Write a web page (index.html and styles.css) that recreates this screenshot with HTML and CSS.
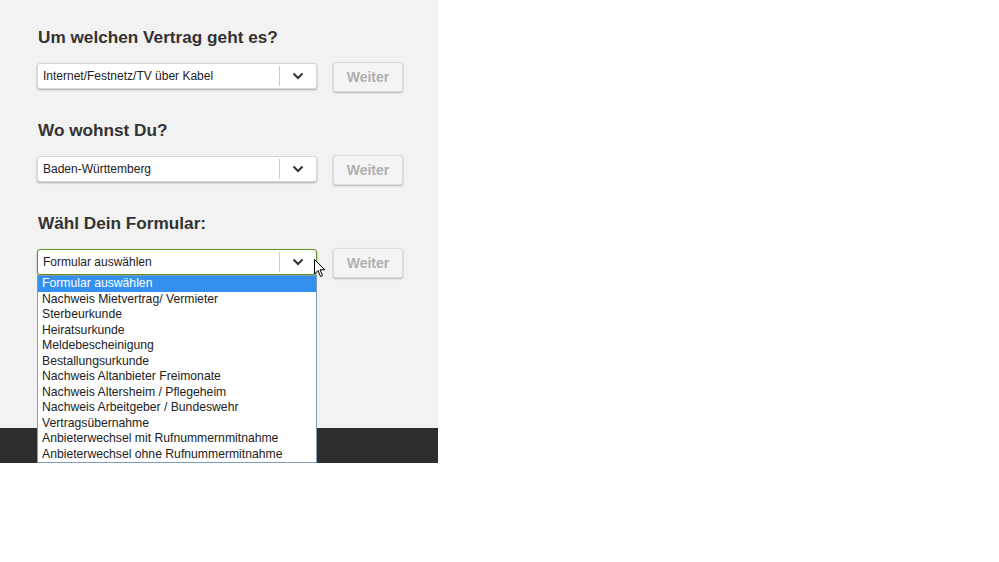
FILE: index.html
```html
<!DOCTYPE html>
<html lang="de">
<head>
    <meta charset="UTF-8">
    <title>Formular</title>
    <link rel="stylesheet" href="styles.css">
</head>
<body>

    <div class="page">
        <div class="panel">

            <!-- Vertrag -->
            <div class="step">
                <h2>Um welchen Vertrag geht es?</h2>
                <div class="row">
                    <div class="select">
                        <span class="value">Internet/Festnetz/TV über Kabel</span>
                        <span class="arrow"><svg width="12" height="8" viewBox="0 0 12 8"><path d="M1.5 1.5 L6 6 L10.5 1.5" fill="none" stroke="#333" stroke-width="2"/></svg></span>
                    </div>
                    <button class="btn">Weiter</button>
                </div>
            </div>

            <!-- Bundesland -->
            <div class="step">
                <h2>Wo wohnst Du?</h2>
                <div class="row">
                    <div class="select">
                        <span class="value">Baden-Württemberg</span>
                        <span class="arrow"><svg width="12" height="8" viewBox="0 0 12 8"><path d="M1.5 1.5 L6 6 L10.5 1.5" fill="none" stroke="#333" stroke-width="2"/></svg></span>
                    </div>
                    <button class="btn">Weiter</button>
                </div>
            </div>

            <!-- Formular -->
            <div class="step">
                <h2>Wähl Dein Formular:</h2>
                <div class="row">
                    <div class="select open">
                        <span class="value">Formular auswählen</span>
                        <span class="arrow"><svg width="12" height="8" viewBox="0 0 12 8"><path d="M1.5 1.5 L6 6 L10.5 1.5" fill="none" stroke="#333" stroke-width="2"/></svg></span>
                        <ul class="options">
                            <li class="selected">Formular auswählen</li>
                            <li>Nachweis Mietvertrag/ Vermieter</li>
                            <li>Sterbeurkunde</li>
                            <li>Heiratsurkunde</li>
                            <li>Meldebescheinigung</li>
                            <li>Bestallungsurkunde</li>
                            <li>Nachweis Altanbieter Freimonate</li>
                            <li>Nachweis Altersheim / Pflegeheim</li>
                            <li>Nachweis Arbeitgeber / Bundeswehr</li>
                            <li>Vertragsübernahme</li>
                            <li>Anbieterwechsel mit Rufnummernmitnahme</li>
                            <li>Anbieterwechsel ohne Rufnummermitnahme</li>
                        </ul>
                        <svg class="cursor" width="12" height="19" viewBox="0 0 12 19"><path d="M0.5 0.5 L0.5 15 L4 11.5 L6.5 17.5 L8.5 16.5 L6 10.8 L10.8 10.8 Z" fill="#fff" stroke="#000" stroke-width="1"/></svg>
                    </div>
                    <button class="btn">Weiter</button>
                </div>
            </div>

        </div>
        <div class="footer"></div>
    </div>

</body>
</html>
```

FILE: styles.css
```css
* {
    margin: 0;
    padding: 0;
    box-sizing: border-box;
    font-family: "Liberation Sans", Arial, sans-serif;
}
body {
    background: #fff;
}

.page {
    width: 438px;
}

/* Grey panel */
.panel {
    background: #f2f2f2;
    height: 428px;
    padding: 26px 0 0 37px;
}
.step {
    margin-bottom: 27px;
}
h2 {
    font-size: 17.2px;
    line-height: 22px;
    font-weight: bold;
    color: #333;
    margin: 0 0 15px 1px;
}
.row {
    display: flex;
    align-items: flex-start;
    gap: 16px;
}

/* Select box */
.select {
    position: relative;
    display: flex;
    align-items: center;
    width: 280px;
    height: 26px;
    background: #fff;
    border: 1px solid #d6d6d6;
    border-radius: 3px;
    box-shadow: 0px 1px 2px rgba(0, 0, 0, 0.3);
}
.select .value {
    flex: 1;
    font-size: 12px;
    color: #222;
    padding-left: 5px;
}
.select .arrow {
    width: 37px;
    height: 20px;
    border-left: 1px solid #ccc;
    display: flex;
    align-items: center;
    justify-content: center;
}
.select.open {
    border-color: #5f8f22;
}

/* Dropdown list */
.options {
    position: absolute;
    top: 25px;
    left: -1px;
    width: 280px;
    list-style: none;
    background: #fff;
    border: 1px solid #7f9db9;
    z-index: 10;
}
.options li {
    font-size: 12.2px;
    line-height: 15.5px;
    color: #222;
    padding-left: 4px;
    white-space: nowrap;
}
.options li.selected {
    background: #3390ef;
    color: #fff;
}
.cursor {
    position: absolute;
    left: 276px;
    top: 9px;
    z-index: 11;
}

/* Button */
.btn {
    width: 70px;
    height: 30px;
    margin-top: -1px;
    background: #f4f4f4;
    border: 1px solid #dcdcdc;
    border-radius: 3px;
    box-shadow: 0px 1px 2px rgba(0, 0, 0, 0.25);
    font-size: 14px;
    font-weight: bold;
    color: #b0b0b0;
    cursor: pointer;
}

/* Dark footer */
.footer {
    background: #2d2d2d;
    height: 35px;
}
```
